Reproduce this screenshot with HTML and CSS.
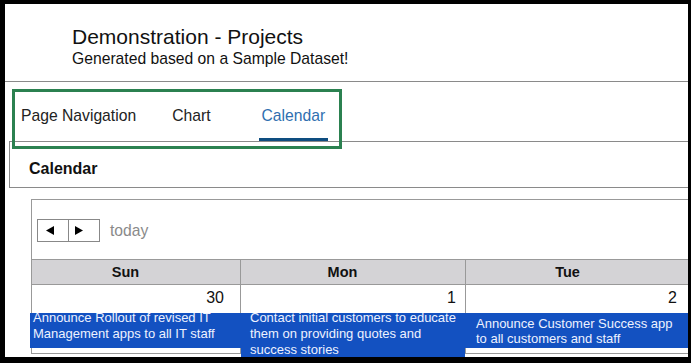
FILE: index.html
```html
<!DOCTYPE html>
<html>
<head>
<meta charset="utf-8">
<title>Demonstration - Projects</title>
<link rel="stylesheet" href="styles.css">
</head>
<body>
<div class="frame">
  <header class="app-header">
    <div class="title">Demonstration - Projects</div>
    <div class="subtitle">Generated based on a Sample Dataset!</div>
  </header>
  <nav class="tabs">
    <div class="tab">Page Navigation</div>
    <div class="tab">Chart</div>
    <div class="tab tab-active">Calendar</div>
  </nav>
  <div class="panel-head">Calendar</div>
  <div class="calendar">
    <div class="toolbar">
      <div class="btn-group">
        <div class="btn btn-prev"><svg width="8" height="9" viewBox="0 0 8 9"><polygon points="8,0 8,9 0,4.5" fill="#000"/></svg></div>
        <div class="btn btn-next"><svg width="8" height="9" viewBox="0 0 8 9"><polygon points="0,0 8,4.5 0,9" fill="#000"/></svg></div>
      </div>
      <span class="today">today</span>
    </div>
    <div class="grid">
      <div class="dow">Sun</div>
      <div class="dow">Mon</div>
      <div class="dow">Tue</div>
      <div class="day">
        <div class="date date-sun">30</div>
        <div class="ev ev-sun"><div class="ev-text">Announce Rollout of revised IT Management apps to all IT staff</div></div>
      </div>
      <div class="day">
        <div class="date date-mon">1</div>
        <div class="ev ev-mon"><div class="ev-text">Contact initial customers to educate them on providing quotes and success stories</div></div>
      </div>
      <div class="day">
        <div class="date date-tue">2</div>
        <div class="ev ev-tue"><div class="ev-text ev-text-tue">Announce Customer Success app to all customers and staff</div></div>
      </div>
    </div>
  </div>
  <div class="annotation"></div>
</div>
</body>
</html>
```
FILE: styles.css
```css
* { box-sizing: border-box; }
html, body { margin: 0; padding: 0; background: #fff; }
body { font-family: "Liberation Sans", Arial, sans-serif; color: #111; }

.frame {
  position: relative;
  width: 691px;
  height: 363px;
  border-style: solid;
  border-color: #000;
  border-width: 4px 3px 6px 5px;
  overflow: hidden;
  background: #fff;
}

.app-header {
  padding: 21px 0 13px 67px;
  border-bottom: 1px solid #8a8a8a;
}
.title { font-size: 21px; line-height: 24px; color: #111; }
.subtitle { font-size: 15.7px; line-height: 19px; color: #111; }

.tabs {
  display: flex;
  align-items: flex-end;
  height: 59px;
  padding-left: 13px;
  gap: 30px;
}
.tab {
  font-size: 15.7px;
  line-height: 20px;
  padding: 0 3px 12px;
  border-bottom: 3px solid transparent;
  color: #222;
}
.tab-active {
  color: #2f6fb0;
  border-bottom-color: #0e4d80;
  margin-left: 15px;
}

.panel-head {
  margin-left: 4px;
  border: 1px solid #8a8a8a;
  border-right: none;
  padding: 17px 0 8px 19px;
  font-weight: bold;
  font-size: 16px;
  line-height: 20px;
  color: #111;
}

.calendar {
  margin: 11px 0 0 26px;
  width: 700px;
  border-top: 1px solid #999;
  border-left: 1px solid #999;
}

.toolbar {
  display: flex;
  align-items: flex-start;
  height: 60px;
  padding: 19px 0 0 5px;
  border-bottom: 1px solid #999;
}
.btn-group { display: flex; }
.btn {
  height: 23px;
  border: 1px solid #888;
  display: flex;
  align-items: center;
  background: #fff;
}
.btn svg { display: block; }
.btn-prev { width: 32px; padding-left: 8px; }
.btn-next { width: 31px; border-left: none; padding-left: 6px; }
.today {
  margin-left: 10px;
  font-size: 15.7px;
  line-height: 23px;
  color: #8a8a8a;
}

.grid {
  display: grid;
  grid-template-columns: 209px 225px 225px;
}
.dow {
  height: 25px;
  background: #d4d3d6;
  border-right: 1px solid #999;
  border-bottom: 1px solid #999;
  text-align: center;
  padding-right: 21px;
  font-weight: bold;
  font-size: 14.5px;
  line-height: 24px;
  color: #111;
}
.day {
  height: 69px;
  border-right: 1px solid #999;
  border-bottom: 1px solid #999;
}
.date {
  font-size: 16px;
  line-height: 20px;
  padding-top: 3px;
  text-align: right;
  color: #111;
}
.date-sun { padding-right: 16px; }
.date-mon { padding-right: 9px; }
.date-tue { padding-right: 13px; }

.ev {
  display: flow-root;
  margin-top: 5px;
  height: 35px;
  background: #1351c1;
  color: #eef2ff;
  font-size: 13px;
  line-height: 16px;
}
.ev-text { margin-top: -3px; }
.ev-sun { margin-left: -2px; margin-right: -1px; padding: 0 4px 0 3px; }
.ev-mon { height: 45px; padding: 0 4px 0 9px; }
.ev-tue { margin-left: -1px; padding: 3px 12px 0 11px; line-height: 15px; }
.ev-text-tue { margin-top: 0; }

.annotation {
  position: absolute;
  left: 7px;
  top: 85px;
  width: 330px;
  height: 60px;
  border: 3px solid #2b8150;
}
```
